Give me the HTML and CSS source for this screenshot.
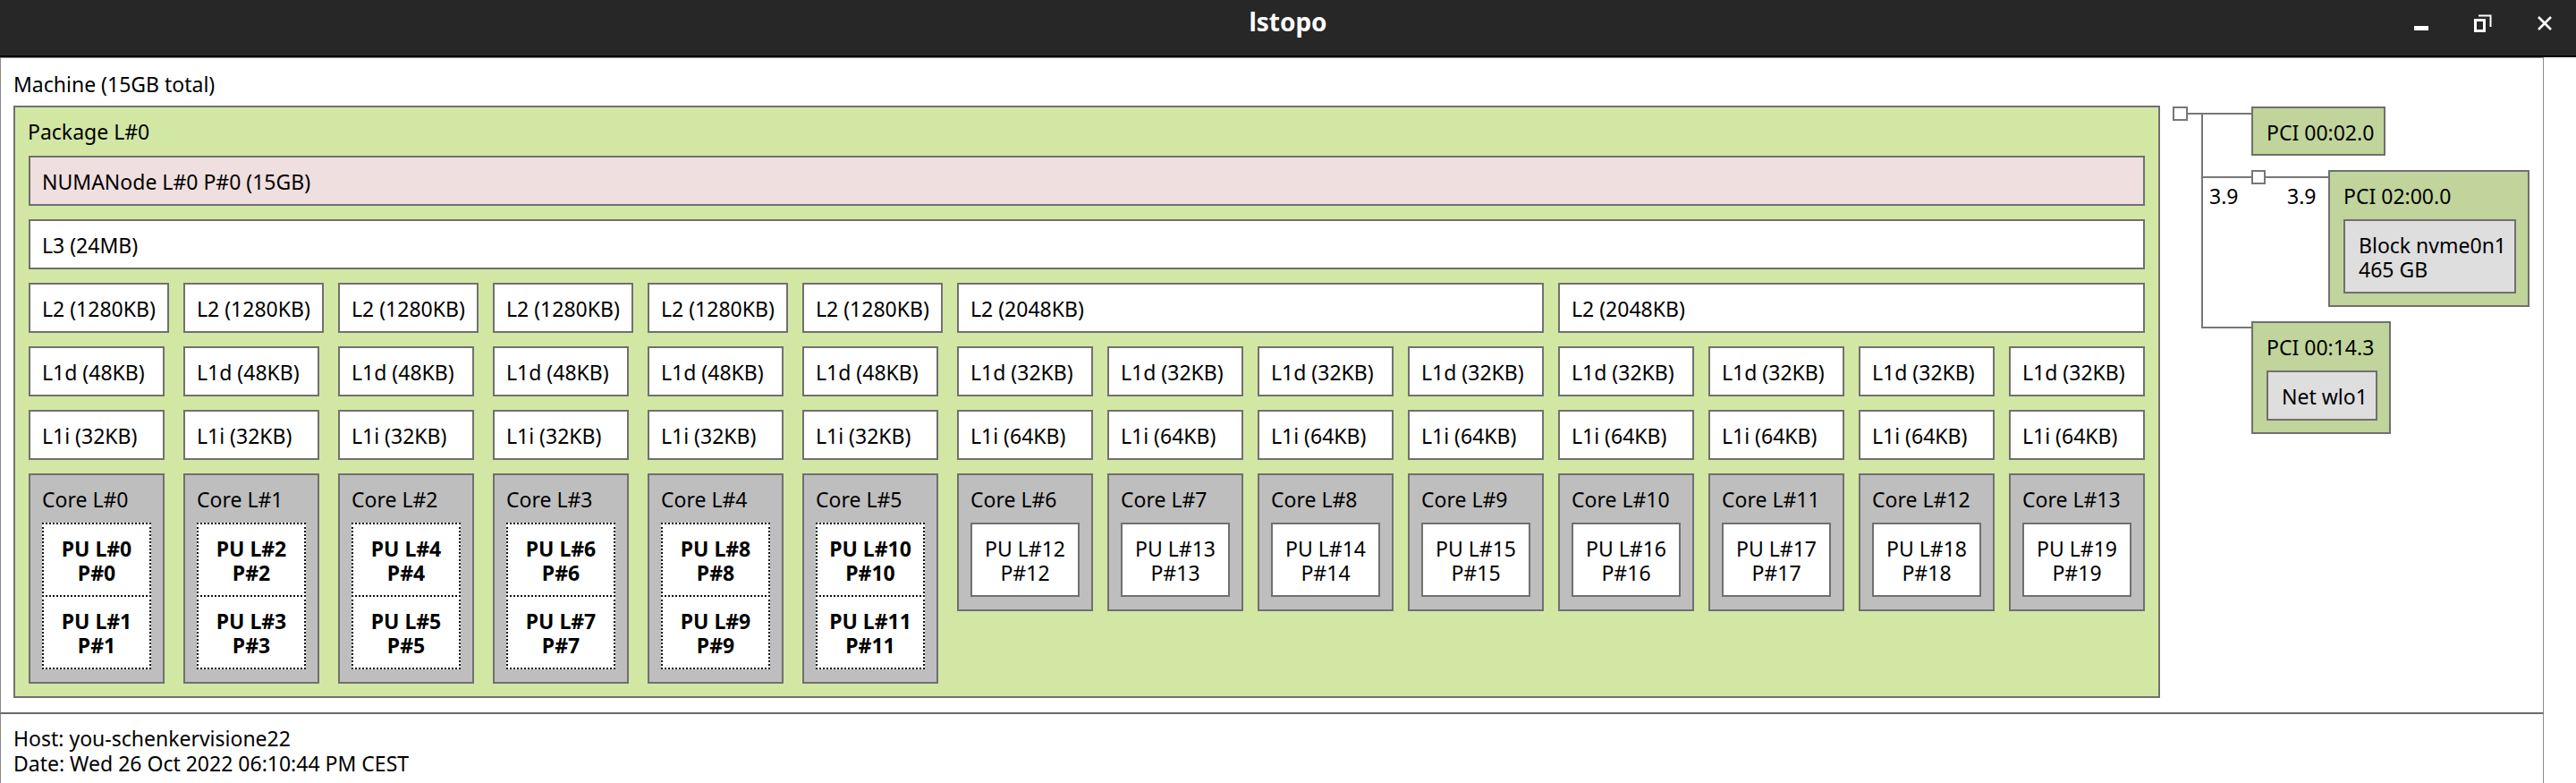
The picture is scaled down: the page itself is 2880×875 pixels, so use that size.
FILE: index.html
```html
<!DOCTYPE html>
<html lang="en">
<head>
<meta charset="utf-8">
<title>lstopo</title>
<link rel="stylesheet" href="styles.css">
</head>
<body>
<div class="window">
  <header class="titlebar">
    <div class="title">lstopo</div>
    <div class="controls">
      <svg class="ctl" width="24" height="24" viewBox="0 0 24 24"><rect x="4" y="15" width="16" height="5" fill="#fff"/></svg>
      <svg class="ctl" width="24" height="24" viewBox="0 0 24 24"><path d="M7 3.5 H20.5 V16" fill="none" stroke="#fff" stroke-width="2"/><rect x="3.5" y="8.5" width="10" height="12" fill="none" stroke="#fff" stroke-width="3"/></svg>
      <svg class="ctl" width="24" height="24" viewBox="0 0 24 24"><path d="M5 5 L19 19 M19 5 L5 19" fill="none" stroke="#fff" stroke-width="2.6"/></svg>
    </div>
  </header>

  <main class="canvas">
    <section class="machine">
      <div class="label">Machine (15GB total)</div>
      <div class="machine-body">
        <div class="box package">
          <div class="label pkg-label">Package L#0</div>
          <div class="topo">
            <div class="box numa full">NUMANode L#0 P#0 (15GB)</div>
            <div class="box cache full">L3 (24MB)</div>

            <div class="box cache">L2 (1280KB)</div>
            <div class="box cache">L2 (1280KB)</div>
            <div class="box cache">L2 (1280KB)</div>
            <div class="box cache">L2 (1280KB)</div>
            <div class="box cache">L2 (1280KB)</div>
            <div class="box cache">L2 (1280KB)</div>
            <div class="box cache span4">L2 (2048KB)</div>
            <div class="box cache span4">L2 (2048KB)</div>

            <div class="box cache l1">L1d (48KB)</div>
            <div class="box cache l1">L1d (48KB)</div>
            <div class="box cache l1">L1d (48KB)</div>
            <div class="box cache l1">L1d (48KB)</div>
            <div class="box cache l1">L1d (48KB)</div>
            <div class="box cache l1">L1d (48KB)</div>
            <div class="box cache l1">L1d (32KB)</div>
            <div class="box cache l1">L1d (32KB)</div>
            <div class="box cache l1">L1d (32KB)</div>
            <div class="box cache l1">L1d (32KB)</div>
            <div class="box cache l1">L1d (32KB)</div>
            <div class="box cache l1">L1d (32KB)</div>
            <div class="box cache l1">L1d (32KB)</div>
            <div class="box cache l1">L1d (32KB)</div>

            <div class="box cache l1">L1i (32KB)</div>
            <div class="box cache l1">L1i (32KB)</div>
            <div class="box cache l1">L1i (32KB)</div>
            <div class="box cache l1">L1i (32KB)</div>
            <div class="box cache l1">L1i (32KB)</div>
            <div class="box cache l1">L1i (32KB)</div>
            <div class="box cache l1">L1i (64KB)</div>
            <div class="box cache l1">L1i (64KB)</div>
            <div class="box cache l1">L1i (64KB)</div>
            <div class="box cache l1">L1i (64KB)</div>
            <div class="box cache l1">L1i (64KB)</div>
            <div class="box cache l1">L1i (64KB)</div>
            <div class="box cache l1">L1i (64KB)</div>
            <div class="box cache l1">L1i (64KB)</div>

            <div class="box core"><div class="label">Core L#0</div><div class="pus"><div class="pu smt">PU L#0<br>P#0</div><div class="pu smt">PU L#1<br>P#1</div></div></div>
            <div class="box core"><div class="label">Core L#1</div><div class="pus"><div class="pu smt">PU L#2<br>P#2</div><div class="pu smt">PU L#3<br>P#3</div></div></div>
            <div class="box core"><div class="label">Core L#2</div><div class="pus"><div class="pu smt">PU L#4<br>P#4</div><div class="pu smt">PU L#5<br>P#5</div></div></div>
            <div class="box core"><div class="label">Core L#3</div><div class="pus"><div class="pu smt">PU L#6<br>P#6</div><div class="pu smt">PU L#7<br>P#7</div></div></div>
            <div class="box core"><div class="label">Core L#4</div><div class="pus"><div class="pu smt">PU L#8<br>P#8</div><div class="pu smt">PU L#9<br>P#9</div></div></div>
            <div class="box core"><div class="label">Core L#5</div><div class="pus"><div class="pu smt">PU L#10<br>P#10</div><div class="pu smt">PU L#11<br>P#11</div></div></div>
            <div class="box core"><div class="label">Core L#6</div><div class="pus"><div class="box pu">PU L#12<br>P#12</div></div></div>
            <div class="box core"><div class="label">Core L#7</div><div class="pus"><div class="box pu">PU L#13<br>P#13</div></div></div>
            <div class="box core"><div class="label">Core L#8</div><div class="pus"><div class="box pu">PU L#14<br>P#14</div></div></div>
            <div class="box core"><div class="label">Core L#9</div><div class="pus"><div class="box pu">PU L#15<br>P#15</div></div></div>
            <div class="box core"><div class="label">Core L#10</div><div class="pus"><div class="box pu">PU L#16<br>P#16</div></div></div>
            <div class="box core"><div class="label">Core L#11</div><div class="pus"><div class="box pu">PU L#17<br>P#17</div></div></div>
            <div class="box core"><div class="label">Core L#12</div><div class="pus"><div class="box pu">PU L#18<br>P#18</div></div></div>
            <div class="box core"><div class="label">Core L#13</div><div class="pus"><div class="box pu">PU L#19<br>P#19</div></div></div>
          </div>
        </div>

        <div class="io">
          <svg class="links" width="400" height="370" viewBox="0 0 400 370">
            <g fill="none" stroke="#777" stroke-width="2">
              <path d="M17 9 H88"/>
              <path d="M33 9 V249"/>
              <path d="M33 80 H89"/>
              <path d="M103 80 H175"/>
              <path d="M33 248 H88"/>
            </g>
            <rect x="1" y="2" width="15" height="14" fill="#fff" stroke="#777" stroke-width="2"/>
            <rect x="89" y="73" width="14" height="14" fill="#fff" stroke="#777" stroke-width="2"/>
          </svg>
          <span class="speed s1">3.9</span>
          <span class="speed s2">3.9</span>
          <div class="box pci p1"><div class="label">PCI 00:02.0</div></div>
          <div class="box pci p2">
            <div class="label">PCI 02:00.0</div>
            <div class="box osdev block">Block nvme0n1<br>465 GB</div>
          </div>
          <div class="box pci p3">
            <div class="label">PCI 00:14.3</div>
            <div class="box osdev net">Net wlo1</div>
          </div>
        </div>
      </div>
    </section>

    <footer class="legend">
      <div>Host: you-schenkervisione22</div>
      <div>Date: Wed 26 Oct 2022 06:10:44 PM CEST</div>
    </footer>
  </main>
</div>
</body>
</html>
```

FILE: styles.css
```css
* {
  box-sizing: border-box;
  margin: 0;
  padding: 0;
}

html, body {
  background: #ffffff;
}

body {
  width: 2880px;
  height: 875px;
  overflow: hidden;
  font-family: "Noto Sans", "Open Sans", sans-serif;
  font-size: 23px;
  line-height: 27.5px;
  color: #000;
}

/* ---------- title bar ---------- */
.titlebar {
  height: 64px;
  background: #272727;
  border-bottom: 2px solid #000;
  display: grid;
  grid-template-columns: 1fr auto 1fr;
}

.title {
  grid-column: 2;
  color: #fff;
  font-weight: 700;
  font-size: 28px;
  line-height: 38px;
  padding-top: 5px;
}

.controls {
  grid-column: 3;
  justify-self: end;
  display: flex;
  align-items: flex-start;
  gap: 45px;
  padding: 14px 23px 0 0;
}

.ctl {
  display: block;
}

/* ---------- canvas ---------- */
.machine {
  width: 2844px;
  border: 1px solid #8a8a8a;
  border-bottom: 2px solid #6a6a6a;
  padding: 16px 0 16px 14px;
}

.machine-body {
  display: flex;
  align-items: flex-start;
  gap: 14px;
  margin-top: 9.5px;
}

.label {
  white-space: nowrap;
}

.box {
  border: 2px solid #707070;
  white-space: nowrap;
}

.package {
  width: 2400px;
  background: #d2e7a4;
  padding: 14px 15px 14px 15px;
}

.pkg-label {
  margin-left: -1px;
}

.topo {
  margin-top: 12.5px;
  display: grid;
  grid-template-columns: repeat(6, 157px) repeat(8, 152px);
  grid-template-rows: repeat(5, 56px) auto;
  column-gap: 16px;
  row-gap: 15px;
  align-items: start;
  justify-items: start;
}

.full {
  grid-column: 1 / -1;
  width: 100%;
}

.span4 {
  grid-column: span 4;
  width: 100%;
}

.cache,
.numa {
  height: 56px;
  padding: 14px 13px 0 13px;
  background: #ffffff;
  width: 100%;
}

.numa {
  background: #efdfde;
}

.l1 {
  width: 152px;
}

.core {
  width: 152px;
  background: #bebebe;
  padding: 14px 13px 14px 13px;
}

.pus {
  margin-top: 11px;
  display: flex;
  flex-direction: column;
}

.pu {
  height: 83px;
  background: #fff;
  text-align: center;
  padding-top: 14px;
}

.pu.smt {
  border: 2px dotted #111;
  font-weight: 700;
}

.pu.smt + .pu.smt {
  margin-top: -2px;
}

/* ---------- I/O tree ---------- */
.io {
  position: relative;
  width: 400px;
  height: 370px;
}

.links {
  position: absolute;
  left: 0;
  top: 0;
}

.speed {
  position: absolute;
  top: 88px;
}

.s1 { left: 41px; }
.s2 { left: 128px; }

.pci {
  position: absolute;
  background: #c0d49b;
  padding: 14px 14px 0 15px;
}

.p1 { left: 88px; top: 1px; width: 150px; height: 55px; }
.p2 { left: 174px; top: 72px; width: 225px; height: 153px; }
.p3 { left: 88px; top: 241px; width: 156px; height: 126px; }

.osdev {
  background: #dedede;
  margin-top: 11px;
  padding: 14px 10px 0 15px;
}

.block {
  width: 193px;
  height: 83px;
}

.net {
  width: 124px;
  height: 56px;
}

/* ---------- legend ---------- */
.legend {
  width: 2844px;
  border-left: 1px solid #8a8a8a;
  border-right: 1px solid #8a8a8a;
  padding: 13px 14px 0 14px;
  line-height: 28px;
  height: 120px;
}
```
